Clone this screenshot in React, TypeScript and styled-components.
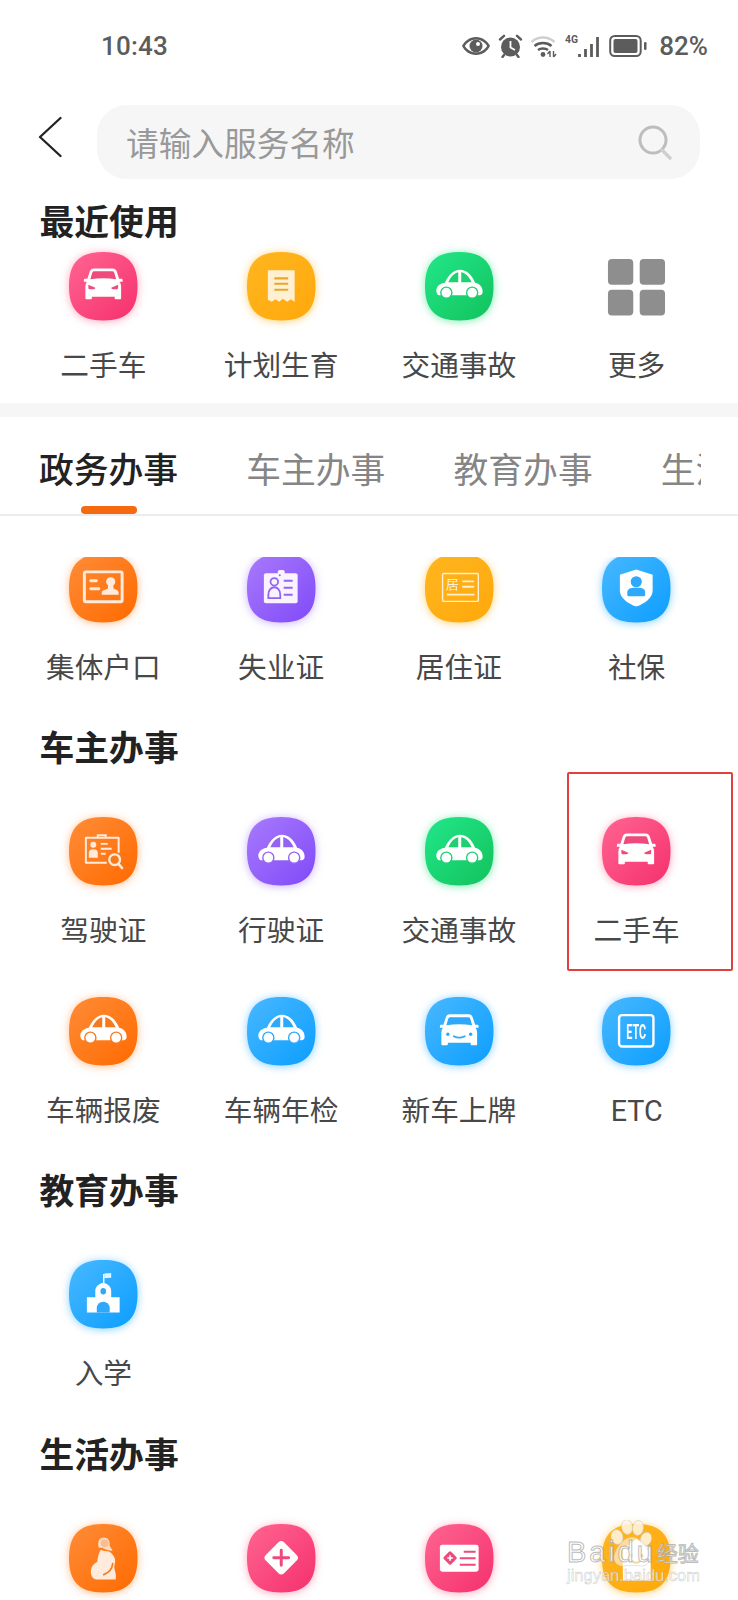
import React, { useId } from "react";
import styled, { createGlobalStyle } from "styled-components";

const GlobalStyle = createGlobalStyle`
  html, body { margin: 0; padding: 0; background: #fff; }
  body { font-family: "Noto Sans CJK SC", "Noto Sans", sans-serif; }
`;

type ToneName = "pink" | "amber" | "green" | "orange" | "purple" | "blue";

const tones: Record<ToneName, { from: string; to: string; solid: string; pale: string; glow: string }> = {
  pink: { from: "#ff6592", to: "#f5306c", solid: "#ee4a7c", pale: "#fff", glow: "rgba(255,80,130,.5)" },
  amber: { from: "#ffb61f", to: "#ffa80c", solid: "#e9a72a", pale: "#fff0d2", glow: "rgba(255,178,30,.6)" },
  green: { from: "#22e78a", to: "#12c25c", solid: "#1ed070", pale: "#fff", glow: "rgba(30,220,120,.55)" },
  orange: { from: "#ff8c38", to: "#ff6a00", solid: "#f57a1f", pale: "#ffeadb", glow: "rgba(255,125,30,.5)" },
  purple: { from: "#a87afc", to: "#804af8", solid: "#9363f2", pale: "#f8f3ff", glow: "rgba(150,100,250,.5)" },
  blue: { from: "#48b8ff", to: "#0c9eff", solid: "#2ea8fa", pale: "#fff", glow: "rgba(40,170,255,.55)" },
};

const SQUIRCLE = "M34.5 0C59 0 69 11 69 34.5C69 58 59 69 34.5 69C10 69 0 58 0 34.5C0 11 10 0 34.5 0Z";

type GlyphProps = { c: string; pale: string };

const FRONT_CAR =
  "M25 16.500H44Q47 16.500 48 19.500L50.500 27H53Q54 27 54 28.500V30H51Q52.500 32 52.500 35V46.500Q52.500 47.500 51.500 47.500H47Q46 47.500 46 46.500V45H23V46.500Q23 47.500 22 47.500H17.500Q16.500 47.500 16.500 46.500V35Q16.500 32 18 30H15V28.500Q15 27 16 27H18.500L21 19.500Q22 16.500 25 16.500Z";
const WINDSHIELD = "M25.500 19.500H43.500Q45 19.500 45.600 21L47.500 27.500Q34.500 25.500 21.500 27.500L23.400 21Q24 19.500 25.500 19.500Z";

const FrontCar = ({ c }: GlyphProps) => (
  <g>
    <path fill="#fff" d={FRONT_CAR} />
    <path fill={c} d={WINDSHIELD} />
    <path fill={c} d="M19.500 33L26.500 36Q26.500 37.500 24.500 37.500H20.500Q19.500 37.500 19.500 36Z" />
    <path fill={c} d="M49.500 33L42.500 36Q42.500 37.500 44.500 37.500H48.500Q49.500 37.500 49.500 36Z" />
  </g>
);

const SmileCar = ({ c }: GlyphProps) => (
  <g transform="translate(0 1)">
    <path fill="#fff" d={FRONT_CAR} />
    <path fill={c} d={WINDSHIELD} />
    <circle cx="23" cy="36.500" r="1.700" fill={c} />
    <circle cx="46" cy="36.500" r="1.700" fill={c} />
    <path fill="none" stroke={c} strokeWidth="1.800" strokeLinecap="round" d="M29 38.500Q34.500 41.500 40 38.500" />
  </g>
);

const SideCar = ({ c }: GlyphProps) => (
  <g>
    <path
      fill="#fff"
      d="M12 41.500C10 37 13 32 20 31C24 23 29 18 35 18C42 18 47 23 50.500 31C55.500 32 58.500 36 58 41C57.500 43 56 43.500 54 43.500H14C13 43.500 12.500 42.500 12 41.500Z"
    />
    <path fill={c} d="M23.500 30.500C26 25 29 21.500 33.500 20.500V30.500Z" />
    <path fill={c} d="M36.500 20.500C40.500 21 44.500 25 47 30.500H36.500Z" />
    <circle cx="21.500" cy="41" r="5.600" fill="#fff" stroke={c} strokeWidth="1.400" />
    <circle cx="47.500" cy="41" r="5.600" fill="#fff" stroke={c} strokeWidth="1.400" />
  </g>
);

const Receipt = ({ c, pale }: GlyphProps) => (
  <g>
    <path fill={pale} d="M21 18.500H48V50L44 47.500L40.500 50L36 47L32.500 50L28.500 47.500L25 50L21 48Z" />
    <path stroke={c} strokeWidth="2.200" d="M27.500 26.500H41.500M27.500 32H41.500M27.500 38H41.500" fill="none" />
  </g>
);

const IdCard = ({ pale }: GlyphProps) => (
  <g>
    <rect x="15.500" y="18" width="38" height="30" rx="1.500" fill="none" stroke={pale} strokeWidth="3" />
    <path stroke={pale} strokeWidth="3" strokeLinecap="round" fill="none" d="M22 27H27.500M22 35H30" />
    <circle cx="42" cy="28" r="4.600" fill={pale} />
    <path fill={pale} d="M39.500 31.500H44.500L45 35C48 36 50 37 50 38.500V41H33V38.500C33 37 36 36 39 35Z" />
  </g>
);

const Badge = ({ c, pale }: GlyphProps) => (
  <g>
    <rect x="31" y="16" width="7" height="5" rx="2" fill={pale} />
    <rect x="17" y="19.500" width="34" height="30" rx="2" fill={pale} />
    <circle cx="33" cy="21.500" r="1" fill={c} />
    <circle cx="27.500" cy="28" r="3.800" fill="none" stroke={c} strokeWidth="1.800" />
    <path fill="none" stroke={c} strokeWidth="1.800" d="M21.500 44.500V41C21.500 36 24.500 33.500 27.500 33.500C30.500 33.500 33.500 36 33.500 41V44.500Z" />
    <path stroke={c} strokeWidth="2" fill="none" d="M37 27H46M37 34H46M37 41H46" />
  </g>
);

const Residence = ({ pale }: GlyphProps) => (
  <g>
    <rect x="17.700" y="19.700" width="36" height="28" fill="none" stroke={pale} strokeWidth="1.400" rx="1" />
    <text x="21" y="35" fontSize="13" fill={pale} fontFamily="'Noto Sans CJK SC', sans-serif">
      居
    </text>
    <path stroke={pale} strokeWidth="1.800" fill="none" d="M37.500 27.500H49.500M37.500 33H49.500M22 41H50" />
  </g>
);

const Shield = ({ c }: GlyphProps) => (
  <g>
    <path fill="#fff" d="M34.500 15.500L51 21V37C51 44 43 50 34.500 53C26 50 18 44 18 37V21Z" />
    <circle cx="34.500" cy="28" r="5.600" fill={c} />
    <path fill={c} d="M25.500 41V38.500C25.500 35.500 28 34.500 31 34H38C41 34.500 43.500 35.500 43.500 38.500V41C43.500 42 43 42.500 42 42.500H27C26 42.500 25.500 42 25.500 41Z" />
  </g>
);

const License = ({ pale, c }: GlyphProps) => (
  <g>
    <path fill="none" stroke={pale} strokeWidth="2" d="M29 21V18.500H37V21" />
    <path fill="none" stroke={pale} strokeWidth="2" strokeLinejoin="round" d="M38 46H17V21H50V36" />
    <circle cx="24.500" cy="28" r="3" fill={pale} />
    <path fill={pale} d="M20 41V36C20 33.500 22 32.500 24.500 32.500C27 32.500 29 33.500 29 36V41Z" />
    <path stroke={pale} strokeWidth="1.800" fill="none" d="M32 27H39M32 32H43M32 37H37" />
    <circle cx="46" cy="43" r="5.400" fill={c} stroke={pale} strokeWidth="2.400" />
    <path stroke={pale} strokeWidth="2.400" strokeLinecap="round" d="M50 47.500L53.500 51.500" />
  </g>
);

const Etc = (_: GlyphProps) => (
  <g>
    <rect x="17.200" y="18.200" width="34.600" height="31.600" rx="3" fill="none" stroke="#fff" strokeWidth="2.400" />
    <text x="24.500" y="42" fontSize="21" fontWeight="700" fill="#fff" textLength="20" lengthAdjust="spacingAndGlyphs" fontFamily="'Roboto', sans-serif">
      ETC
    </text>
  </g>
);

const School = ({ c }: GlyphProps) => (
  <g>
    <path stroke="#fff" strokeWidth="1.400" d="M35 24V14" />
    <path fill="#dff2ff" d="M35.500 13.500L42.500 13V18L35.500 18.500Z" />
    <path fill="#fff" d="M18 53V37.500H26.500V31C26.500 27 30 24 34.500 23C39 24 42.500 27 42.500 31V37.500H51V53Z" />
    <ellipse cx="34.500" cy="31.500" rx="2.800" ry="3.200" fill={c} />
    <path fill={c} d="M28 53V48.500A6.500 6.500 0 0 1 41 48.500V53Z" />
  </g>
);

const Pregnant = ({ c, pale }: GlyphProps) => (
  <g>
    <path fill="#fbd9bc" d="M30 24C28.500 18 30 13.500 35 13.500C40 13.500 41.500 18 41 22C42 24 43.500 26 44 27C40 27 35 25.500 34 24Z" />
    <circle cx="36" cy="19.500" r="3.800" fill="#f78a3a" opacity=".35" />
    <path fill={pale} d="M32 26C33.500 27 38 27.500 41 28C44 30.500 47 34 46.500 38C46 41 45 43 46 46C47 49 47.500 52 47 56H29C24 56 22 52 22 48C22 43 25 40 28.500 38C29 33 30 29 32 26Z" />
    <path fill="none" stroke={c} strokeWidth="1.700" strokeLinecap="round" d="M35 51C40 49 43.500 45 44 40" />
  </g>
);

const Diamond = ({ c }: GlyphProps) => (
  <g>
    <rect x="21.500" y="21" width="26" height="26" rx="4" fill="#fff" transform="rotate(45 34.500 34)" />
    <path stroke={c} strokeWidth="3" strokeLinecap="round" d="M34.500 26.500V41.500M27 34H42" />
  </g>
);

const MedCard = ({ c }: GlyphProps) => (
  <g>
    <rect x="15" y="21" width="39" height="27" rx="2.500" fill="#fff" />
    <rect x="20" y="29" width="10.500" height="10.500" rx="1.600" fill={c} transform="rotate(45 25.250 34.250)" />
    <path stroke="#fff" strokeWidth="1.600" d="M25.250 31.500V37M22.500 34.250H28" />
    <path stroke={c} strokeWidth="2" d="M39 28H51M35 34.500H51M35 41H51" />
  </g>
);

const House = ({ c }: GlyphProps) => (
  <g>
    <path fill="#fff" d="M34.500 15L49 25V57H21V25Z" />
    <circle cx="29" cy="32" r="1.800" fill={c} />
    <circle cx="40" cy="32" r="1.800" fill={c} />
    <path fill="none" stroke={c} strokeWidth="1.800" d="M30 37Q34.500 41 39 37" />
  </g>
);

const glyphs = { FrontCar, SmileCar, SideCar, Receipt, IdCard, Badge, Residence, Shield, License, Etc, School, Pregnant, Diamond, MedCard, House };
type GlyphName = keyof typeof glyphs;

const TileSvg = styled.svg<{ $glow: string; $clipped?: boolean }>`
  display: block;
  width: 68.5px;
  height: 68.5px;
  overflow: visible;
  flex: none;
  filter: drop-shadow(0 1px 4px ${(p) => p.$glow});
  ${(p) => (p.$clipped ? "clip-path: inset(3px -14px -14px -14px);" : "")}
`;

const MoreSvg = styled.svg`
  display: block;
  width: 68.5px;
  height: 68.5px;
  flex: none;
`;

const Tile = ({ tone, glyph, clipped }: { tone: ToneName; glyph: GlyphName; clipped?: boolean }) => {
  const id = useId();
  const t = tones[tone];
  const Glyph = glyphs[glyph];
  return (
    <TileSvg viewBox="0 0 69 69" $glow={t.glow} $clipped={clipped}>
      <defs>
        <linearGradient id={id} x1="0" y1="0" x2="1" y2="1">
          <stop offset="0" stopColor={t.from} />
          <stop offset="1" stopColor={t.to} />
        </linearGradient>
      </defs>
      <path d={SQUIRCLE} fill={`url(#${id})`} />
      <Glyph c={t.solid} pale={t.pale} />
    </TileSvg>
  );
};

const MoreTile = () => (
  <MoreSvg viewBox="0 0 69 69">
    <rect x="6" y="7" width="25.500" height="26" rx="4" fill="#8e8e8e" />
    <rect x="38" y="7" width="25.500" height="26" rx="4" fill="#8e8e8e" />
    <rect x="6" y="38" width="25.500" height="26" rx="4" fill="#8e8e8e" />
    <rect x="38" y="38" width="25.500" height="26" rx="4" fill="#8e8e8e" />
  </MoreSvg>
);

const Page = styled.div`
  position: relative;
  width: 738px;
  height: 1600px;
  overflow: hidden;
  background: #fff;
`;

const StatusBar = styled.div`
  height: 92px;
  box-sizing: border-box;
  display: flex;
  align-items: center;
  justify-content: space-between;
  padding: 0 30px 0 101px;
  font-family: Roboto, "Liberation Sans", sans-serif;
  color: #5c5c5c;
`;

const Clock = styled.span`
  font-size: 26px;
  font-weight: 500;
  letter-spacing: 0.2px;
`;

const StatusIcons = styled.div`
  display: flex;
  align-items: center;
  gap: 7px;
`;

const Percent = styled.span`
  font-size: 26px;
  font-weight: 500;
  margin-left: 5px;
`;

const SearchRow = styled.div`
  margin-top: 13px;
  height: 74px;
  display: flex;
  align-items: center;
  padding: 0 38px 0 38px;
`;

const BackIcon = styled.svg`
  width: 24px;
  height: 42px;
  flex: none;
  margin: -10px 35px 0 0;
`;

const SearchBox = styled.div`
  flex: 1;
  height: 74px;
  border-radius: 30px;
  background: #f6f6f6;
  display: flex;
  align-items: center;
  justify-content: space-between;
  padding: 0 27px 0 29px;
`;

const Placeholder = styled.span`
  font-size: 32.7px;
  line-height: 40px;
  color: #999;
`;

const SearchIcon = styled.svg`
  width: 36px;
  height: 36px;
  flex: none;
`;

const Heading = styled.h2<{ $top: number; $bottom: number }>`
  margin: ${(p) => p.$top}px 0 ${(p) => p.$bottom}px;
  padding-left: 39.5px;
  font-size: 34.8px;
  line-height: 40px;
  font-weight: 700;
  color: #222;
`;

const Grid = styled.div<{ $gap?: number; $top?: number }>`
  display: grid;
  grid-template-columns: repeat(4, 1fr);
  row-gap: ${(p) => p.$gap ?? 46}px;
  padding: ${(p) => p.$top ?? 0}px 12.5px 0 14.5px;
`;

const Item = styled.div<{ $marked?: boolean }>`
  position: relative;
  display: flex;
  flex-direction: column;
  align-items: center;
  ${(p) =>
    p.$marked
      ? `&::after {
          content: "";
          position: absolute;
          left: 19px;
          top: -45px;
          width: 166px;
          height: 199px;
          box-sizing: border-box;
          border: 2px solid #e2403f;
          border-radius: 2px;
        }`
      : ""}
`;

const Label = styled.span`
  margin: 26px 0 1.5px;
  font-family: Roboto, "Noto Sans CJK SC", sans-serif;
  font-size: 28.7px;
  line-height: 38px;
  color: #484848;
  white-space: nowrap;
`;

const Band = styled.div`
  margin-top: 17px;
  height: 14px;
  background: #f6f6f6;
`;

const TabBar = styled.div`
  display: flex;
  gap: 69.3px;
  padding-left: 39.5px;
  margin-right: 37px;
  overflow: hidden;
`;

const Tab = styled.div<{ $active?: boolean }>`
  flex: none;
  width: 138px;
  padding-top: 31px;
  display: flex;
  flex-direction: column;
  align-items: center;
  font-size: 34.8px;
  line-height: 40px;
  font-weight: ${(p) => (p.$active ? 500 : 400)};
  color: ${(p) => (p.$active ? "#222" : "#858585")};
  white-space: nowrap;
`;

const TabMark = styled.div<{ $active?: boolean }>`
  width: 56px;
  height: 8px;
  margin-top: 18px;
  border-radius: 4px;
  background: ${(p) => (p.$active ? "#f56a10" : "transparent")};
`;

const Divider = styled.div`
  height: 2px;
  background: #ececec;
`;

const Watermark = styled.div`
  position: absolute;
  left: 567px;
  top: 1522px;
  width: 134px;
  pointer-events: none;
  font-family: "Liberation Sans", Arial, sans-serif;
  color: rgba(255, 255, 255, 0.72);
  -webkit-text-stroke: 1px rgba(165, 165, 165, 0.75);
`;

const Paw = styled.svg`
  position: absolute;
  left: 37px;
  top: -2px;
  width: 56px;
  height: 56px;
`;

const MarkTop = styled.div`
  position: relative;
  display: flex;
  align-items: center;
  margin-top: 14px;
  height: 32px;
  font-size: 29px;
  line-height: 32px;
  letter-spacing: 2.9px;
  white-space: nowrap;
`;

const MarkCn = styled.span`
  margin-left: 1px;
  font-family: "Noto Sans CJK SC", sans-serif;
  font-size: 21px;
  letter-spacing: 0;
`;

const MarkSite = styled.div`
  position: relative;
  margin-top: -3px;
  font-size: 16.5px;
  line-height: 20px;
  white-space: nowrap;
  -webkit-text-stroke-width: 0.4px;
`;

type Entry = { label?: string; tone: ToneName; glyph: GlyphName; marked?: boolean; clipped?: boolean };

const recent: Entry[] = [
  { label: "二手车", tone: "pink", glyph: "FrontCar" },
  { label: "计划生育", tone: "amber", glyph: "Receipt" },
  { label: "交通事故", tone: "green", glyph: "SideCar" },
];

const gov: Entry[] = [
  { label: "集体户口", tone: "orange", glyph: "IdCard", clipped: true },
  { label: "失业证", tone: "purple", glyph: "Badge", clipped: true },
  { label: "居住证", tone: "amber", glyph: "Residence", clipped: true },
  { label: "社保", tone: "blue", glyph: "Shield", clipped: true },
];

const car: Entry[] = [
  { label: "驾驶证", tone: "orange", glyph: "License" },
  { label: "行驶证", tone: "purple", glyph: "SideCar" },
  { label: "交通事故", tone: "green", glyph: "SideCar" },
  { label: "二手车", tone: "pink", glyph: "FrontCar", marked: true },
  { label: "车辆报废", tone: "orange", glyph: "SideCar" },
  { label: "车辆年检", tone: "blue", glyph: "SideCar" },
  { label: "新车上牌", tone: "blue", glyph: "SmileCar" },
  { label: "ETC", tone: "blue", glyph: "Etc" },
];

const edu: Entry[] = [{ label: "入学", tone: "blue", glyph: "School" }];

const life: Entry[] = [
  { tone: "orange", glyph: "Pregnant" },
  { tone: "pink", glyph: "Diamond" },
  { tone: "pink", glyph: "MedCard" },
  { tone: "amber", glyph: "House" },
];

const Entries = ({ list }: { list: Entry[] }) => (
  <>
    {list.map((e) => (
      <Item key={e.tone + e.glyph} $marked={e.marked}>
        <Tile tone={e.tone} glyph={e.glyph} clipped={e.clipped} />
        {e.label && <Label>{e.label}</Label>}
      </Item>
    ))}
  </>
);

export default function App() {
  return (
    <Page>
      <GlobalStyle />
      <StatusBar>
        <Clock>10:43</Clock>
        <StatusIcons>
          <svg width="30" height="20" viewBox="0 0 30 20">
            <path fill="#5c5c5c" d="M15 1C8.500 1 3.500 5 1 10C3.500 15 8.500 19 15 19C21.500 19 26.500 15 29 10C26.500 5 21.500 1 15 1Z" />
            <path fill="#fff" d="M15 3.500C10 3.500 6 6.500 3.800 10C6 13.500 10 16.500 15 16.500C20 16.500 24 13.500 26.200 10C24 6.500 20 3.500 15 3.500Z" />
            <circle cx="15" cy="10" r="6.500" fill="#5c5c5c" />
            <circle cx="17" cy="8" r="2" fill="#fff" />
          </svg>
          <svg width="25" height="24" viewBox="0 0 25 24">
            <circle cx="12.500" cy="13" r="9.500" fill="#5c5c5c" />
            <path stroke="#fff" strokeWidth="1.800" fill="none" d="M12.500 7V13.500L17 16" />
            <path stroke="#5c5c5c" strokeWidth="2.400" strokeLinecap="round" d="M2 5.500L6 1.800M23 5.500L19 1.800M6 21L4.500 23M19 21L20.500 23" />
          </svg>
          <svg width="28" height="24" viewBox="0 0 28 24">
            <path fill="none" stroke="#cfcfcf" strokeWidth="2.400" d="M1.500 8C8 2 18 2 24.500 8" />
            <path fill="none" stroke="#5c5c5c" strokeWidth="2.400" d="M4.500 12C9 8 17 8 21.500 12M8 16C10.500 14 15.500 14 18 16" />
            <circle cx="13" cy="20.500" r="2.400" fill="#5c5c5c" />
            <path stroke="#5c5c5c" strokeWidth="1.400" fill="none" d="M20 23V17M17.500 20L20 17M23.500 17V23M23.500 23L26 20" />
          </svg>
          <svg width="37" height="24" viewBox="0 0 37 24">
            <text x="0" y="9" fontSize="10" fontWeight="700" fill="#5c5c5c" fontFamily="Roboto, sans-serif" textLength="13" lengthAdjust="spacingAndGlyphs">
              4G
            </text>
            <path stroke="#5c5c5c" strokeWidth="2.800" d="M14.500 23V20M20.500 23V15M26.500 23V10M32.500 23V3" />
          </svg>
          <svg width="38" height="24" viewBox="0 0 38 24">
            <rect x="1.200" y="2" width="30.500" height="20" rx="4.500" fill="none" stroke="#5c5c5c" strokeWidth="2" />
            <rect x="4.500" y="5" width="24" height="14" rx="2" fill="#5c5c5c" />
            <rect x="35" y="8" width="2.500" height="8" rx="1.200" fill="#5c5c5c" />
          </svg>
          <Percent>82%</Percent>
        </StatusIcons>
      </StatusBar>

      <SearchRow>
        <BackIcon viewBox="0 0 24 42">
          <path d="M22.500 2L2 21L22.500 40" fill="none" stroke="#222" strokeWidth="2.300" strokeLinecap="round" strokeLinejoin="round" />
        </BackIcon>
        <SearchBox>
          <Placeholder>请输入服务名称</Placeholder>
          <SearchIcon viewBox="0 0 36 36">
            <circle cx="16" cy="16" r="13" fill="none" stroke="#bdbdbd" strokeWidth="3" />
            <path d="M25 26L33 34" stroke="#cfcfcf" strokeWidth="3.400" strokeLinecap="round" />
          </SearchIcon>
        </SearchBox>
      </SearchRow>

      <Heading $top={21} $bottom={12}>
        最近使用
      </Heading>
      <Grid>
        <Entries list={recent} />
        <Item>
          <MoreTile />
          <Label>更多</Label>
        </Item>
      </Grid>

      <Band />
      <TabBar>
        {["政务办事", "车主办事", "教育办事", "生活办事"].map((t, i) => (
          <Tab key={t} $active={i === 0}>
            {t}
            <TabMark $active={i === 0} />
          </Tab>
        ))}
      </TabBar>
      <Divider />

      <Grid $top={38}>
        <Entries list={gov} />
      </Grid>

      <Heading $top={38} $bottom={51}>
        车主办事
      </Heading>
      <Grid>
        <Entries list={car} />
      </Grid>

      <Heading $top={38} $bottom={51}>
        教育办事
      </Heading>
      <Grid>
        <Entries list={edu} />
      </Grid>

      <Heading $top={39} $bottom={51}>
        生活办事
      </Heading>
      <Grid>
        <Entries list={life} />
      </Grid>

      <Watermark>
        <Paw viewBox="0 0 56 56">
          <g fill="rgba(255,245,225,.88)" stroke="rgba(190,190,190,.6)" strokeWidth=".7">
            <ellipse cx="13" cy="17" rx="6" ry="7.500" transform="rotate(-15 13 17)" />
            <ellipse cx="23" cy="7" rx="5.500" ry="7.500" transform="rotate(-8 23 7)" />
            <ellipse cx="34" cy="8" rx="5.500" ry="7.500" transform="rotate(8 34 8)" />
            <ellipse cx="42" cy="19" rx="5.500" ry="7" transform="rotate(20 42 19)" />
            <path fill="rgba(255,255,255,.55)" d="M28 17C36 17 44 27 46 35C47 42 42 47 36 46C31 45 25 45 20 46C14 47 9 42 10 36C12 27 20 17 28 17Z" />
          </g>
        </Paw>
        <MarkTop>
          Baidu<MarkCn>经验</MarkCn>
        </MarkTop>
        <MarkSite>jingyan.baidu.com</MarkSite>
      </Watermark>
    </Page>
  );
}
